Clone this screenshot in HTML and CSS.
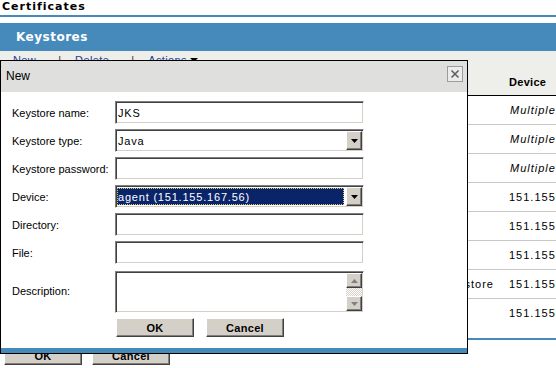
FILE: index.html
```html
<!DOCTYPE html>
<html lang="en">
<head>
    <meta charset="UTF-8">
    <meta name="viewport" content="width=device-width, initial-scale=1.0">
    <title>Certificates</title>
    <link rel="stylesheet" href="styles.css">
</head>
<body>

<div class="page">
    <h1 class="page-title">Certificates</h1>

    <div class="panel">
        <div class="panel-head">Keystores</div>
        <div class="toolbar">
            <a href="#">New</a><span class="sep">|</span><a href="#">Delete</a><span class="sep">|</span><a href="#">Actions</a><span class="caret"></span>
        </div>

        <div class="grid">
            <div class="row head"><span></span><span class="type"></span><span class="dev">Device</span></div>
            <div class="row"><span></span><span class="type"></span><span class="dev multi">Multiple</span></div>
            <div class="row"><span></span><span class="type"></span><span class="dev multi">Multiple</span></div>
            <div class="row"><span></span><span class="type"></span><span class="dev multi">Multiple</span></div>
            <div class="row"><span></span><span class="type"></span><span class="dev">151.155.167.56</span></div>
            <div class="row"><span></span><span class="type"></span><span class="dev">151.155.167.56</span></div>
            <div class="row"><span></span><span class="type"></span><span class="dev">151.155.167.56</span></div>
            <div class="row"><span></span><span class="type">Java keystore</span><span class="dev">151.155.167.56</span></div>
            <div class="row last"><span></span><span class="type"></span><span class="dev">151.155.167.56</span></div>
        </div>

        <div class="panel-foot"></div>
        <div class="actions">
            <button class="btn">OK</button>
            <button class="btn">Cancel</button>
        </div>
    </div>
</div>

<div class="dialog">
    <div class="dialog-title">
        <span>New</span>
        <span class="close-box">
            <svg width="14" height="14" viewBox="0 0 14 14"><path d="M3.5 3.5l7 7M10.5 3.5l-7 7" stroke="#5f5f5f" stroke-width="1.6" fill="none"/></svg>
        </span>
    </div>

    <div class="dialog-body">
        <label>Keystore name:</label>
        <div class="field"><span class="value">JKS</span></div>

        <label>Keystore type:</label>
        <div class="field select">
            <span class="value">Java</span>
            <span class="drop"><svg width="7" height="4"><path d="M0 0h7L3.5 4z" fill="#000"/></svg></span>
        </div>

        <label>Keystore password:</label>
        <div class="field"></div>

        <label>Device:</label>
        <div class="field select">
            <span class="value picked">agent (151.155.167.56)</span>
            <span class="drop"><svg width="7" height="4"><path d="M0 0h7L3.5 4z" fill="#000"/></svg></span>
        </div>

        <label>Directory:</label>
        <div class="field"></div>

        <label>File:</label>
        <div class="field"></div>

        <label>Description:</label>
        <div class="field area">
            <span class="scroll">
                <span class="sbtn"><svg width="7" height="4"><path d="M0 4h7L3.5 0z" fill="#808080"/></svg></span>
                <span class="track"></span>
                <span class="sbtn"><svg width="7" height="4"><path d="M0 0h7L3.5 4z" fill="#808080"/></svg></span>
            </span>
        </div>

        <div class="dialog-buttons">
            <button class="btn">OK</button>
            <button class="btn">Cancel</button>
        </div>
    </div>

    <div class="dialog-foot"></div>
</div>

</body>
</html>
```

FILE: styles.css
```css
html, body {
    margin: 0;
    overflow: hidden;
}

body {
    font-family: "Liberation Sans", Arial, sans-serif;
    font-size: 11px;
    color: #000;
    background-color: #fff;
    width: 556px;
    height: 368px;
    position: relative;
}

/* page behind the dialog */

.page-title {
    margin: 0;
    height: 15px;
    padding-left: 2px;
    font: bold 11px/13px "DejaVu Sans", sans-serif;
    letter-spacing: 1px;
    border-bottom: 2px solid #468abb;
}

.panel {
    margin-top: 6px;
}

.panel-head {
    height: 28px;
    padding-left: 16px;
    background-color: #468abb;
    color: #fff;
    font: bold 12px/28px "DejaVu Sans", sans-serif;
    letter-spacing: .5px;
}

.toolbar {
    display: flex;
    align-items: flex-start;
    box-sizing: border-box;
    height: 15px;
    padding: 3px 0 0 13px;
    background-color: #eeeeea;
    line-height: 13px;
}

.toolbar a {
    color: #1e3f94;
    text-decoration: none;
    letter-spacing: .4px;
}

.toolbar .sep {
    color: #333;
    margin: 0 14px 0 22px;
}

.toolbar .caret {
    margin: 4px 0 0 3px;
    border-left: 4px solid transparent;
    border-right: 4px solid transparent;
    border-top: 4px solid #000;
}

.grid {
    width: 620px;
}

.row {
    display: grid;
    grid-template-columns: 390px 115px 115px;
    align-items: center;
    height: 28px;
    border-bottom: 1px solid #c8c8c8;
    letter-spacing: 1px;
}

.row.head {
    box-sizing: border-box;
    height: 30px;
    padding-top: 2px;
    background-color: #eeeeea;
    border-bottom-color: #000;
    font-weight: bold;
    letter-spacing: .3px;
}

.row.last {
    border-bottom: none;
}

.row span {
    padding-left: 4px;
    white-space: nowrap;
    overflow: hidden;
}

.row .type {
    text-align: right;
    padding-right: 11px;
}

.row .multi {
    font-style: italic;
    padding-left: 5px;
}

.panel-foot {
    margin-top: 11px;
    height: 2px;
    background-color: #468abb;
}

.actions {
    display: flex;
    gap: 10px;
    margin: 6px 0 0 4px;
}

.btn {
    box-sizing: border-box;
    width: 78px;
    height: 19px;
    padding: 0;
    background-color: #d4d0c8;
    border: 1px solid;
    border-color: #fff #404040 #404040 #fff;
    box-shadow: inset -1px -1px 0 #808080;
    font: bold 11px "Liberation Sans", Arial, sans-serif;
    letter-spacing: .3px;
    color: #000;
}

/* dialog */

.dialog {
    position: absolute;
    left: 0;
    top: 60px;
    width: 466px;
    border: 1px solid #000;
    background-color: #fff;
}

.dialog-title {
    display: flex;
    justify-content: space-between;
    align-items: flex-start;
    height: 31px;
    padding-left: 5px;
    background-color: #dfdfdd;
    font-size: 12px;
    line-height: 30px;
}

.close-box {
    display: flex;
    margin: 5px 4px 0 0;
    width: 14px;
    height: 14px;
    border: 1px solid #9c9c9c;
    background-color: #ececec;
}

.dialog-body {
    display: grid;
    grid-template-columns: 103px 249px;
    grid-template-rows: repeat(6, 23px) 44px 19px;
    row-gap: 5px;
    align-items: center;
    padding: 9px 0 11px 11px;
}

.dialog-body label {
    white-space: nowrap;
}

.field {
    box-sizing: border-box;
    display: flex;
    align-items: center;
    width: 249px;
    height: 23px;
    padding: 1px;
    border: 1px solid;
    border-color: #808080 #fff #fff #808080;
    box-shadow: inset 1px 1px 0 #404040, inset -1px -1px 0 #d4d0c8;
}

.field .value {
    flex: 1;
    padding-left: 1px;
    letter-spacing: .8px;
    white-space: nowrap;
}

.field .picked {
    align-self: stretch;
    display: flex;
    align-items: center;
    margin: 1px 2px 1px 0;
    padding-left: 0;
    border: 1px dotted #d9c86a;
    background-color: #0a246a;
    color: #fff;
}

.drop, .sbtn {
    box-sizing: border-box;
    display: flex;
    align-items: center;
    justify-content: center;
    width: 16px;
    height: 19px;
    background-color: #d4d0c8;
    border: 1px solid;
    border-color: #fff #404040 #404040 #fff;
    box-shadow: inset -1px -1px 0 #808080;
}

.field.area {
    height: 42px;
    align-self: end;
    justify-content: flex-end;
    align-items: stretch;
}

.scroll {
    display: flex;
    flex-direction: column;
    width: 16px;
}

.scroll .sbtn {
    height: 15px;
}

.scroll .track {
    flex: 1;
    background: repeating-conic-gradient(#d4d0c8 0 25%, #fff 0 50%) 0 0 / 2px 2px;
}

.dialog-buttons {
    grid-column: 2;
    display: flex;
    gap: 12px;
    margin-left: 1px;
}

.dialog-foot {
    height: 5px;
    background-color: #468abb;
}
```
